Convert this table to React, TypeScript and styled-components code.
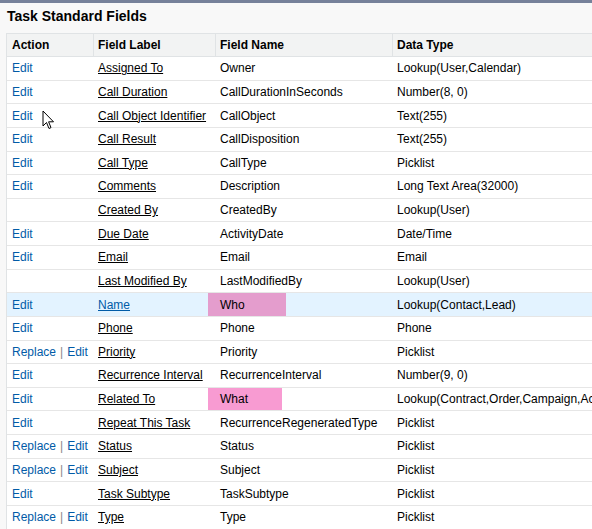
import React from "react";
import styled, { createGlobalStyle } from "styled-components";

const Global = createGlobalStyle`
  html, body { margin: 0; padding: 0; background: #f8f8f8; overflow: hidden; }
  body { font-family: "Liberation Sans", Arial, sans-serif; font-size: 12px; color: #000; }
`;

const Page = styled.div`
  position: relative;
  width: 592px;
  height: 529px;
  overflow: hidden;
  border-top: 3px solid #76819a;
  box-sizing: border-box;
`;

const Title = styled.h2`
  margin: 0;
  padding: 5px 7px 0 7px;
  height: 30px;
  box-sizing: border-box;
  font-size: 14px;
  line-height: 16px;
  font-weight: bold;
  color: #000;
`;

const Table = styled.div`
  margin-left: 6px;
  width: 760px;
  background: #fff;
  border-left: 1px solid #e0e3e5;
  border-top: 1px solid #e0e3e5;
`;

const Row = styled.div<{ $head?: boolean; $hl?: boolean }>`
  display: grid;
  grid-template-columns: 86px 122px 177px 1fr;
  height: ${(p) => (p.$head ? "23px" : "23.63px")};
  box-sizing: border-box;
  border-bottom: 1px solid ${(p) => (p.$head ? "#e0e3e5" : "#e6e6e6")};
  background: ${(p) => (p.$head ? "#f2f3f3" : p.$hl ? "#e3f3ff" : "#fff")};
`;

const HeadCell = styled.div<{ $first?: boolean }>`
  display: flex;
  align-items: center;
  padding-left: ${(p) => (p.$first ? "5px" : "4px")};
  border-left: ${(p) => (p.$first ? "none" : "1px solid #e0e3e5")};
  font-weight: bold;
  font-size: 12px;
  color: #000;
  white-space: nowrap;
`;

const Cell = styled.div<{ $pad?: number }>`
  position: relative;
  display: flex;
  align-items: center;
  padding-left: ${(p) => p.$pad ?? 5}px;
  white-space: nowrap;
  color: #000;
`;

const ActionLink = styled.a`
  color: #015ba7;
  text-decoration: none;
`;

const Pipe = styled.span`
  color: #888;
  margin: 0 4px;
`;

const LabelLink = styled.a<{ $blue?: boolean }>`
  color: ${(p) => (p.$blue ? "#015ba7" : "#000")};
  text-decoration: underline;
`;

const Mark = styled.span<{ $color: string; $w: number }>`
  position: absolute;
  left: -7px;
  top: 0px;
  bottom: 0px;
  width: ${(p) => p.$w}px;
  background: ${(p) => p.$color};
  z-index: 0;
`;

const MarkText = styled.span`
  position: relative;
  z-index: 1;
`;

const Cursor = styled.svg`
  position: absolute;
  left: 42px;
  top: 107px;
  pointer-events: none;
`;

type R = {
  action: "edit" | "replace" | "none";
  label: string;
  name: string;
  type: string;
  hl?: boolean;
  mark?: { color: string; w: number };
};

const rows: R[] = [
  { action: "edit", label: "Assigned To", name: "Owner", type: "Lookup(User,Calendar)" },
  { action: "edit", label: "Call Duration", name: "CallDurationInSeconds", type: "Number(8, 0)" },
  { action: "edit", label: "Call Object Identifier", name: "CallObject", type: "Text(255)" },
  { action: "edit", label: "Call Result", name: "CallDisposition", type: "Text(255)" },
  { action: "edit", label: "Call Type", name: "CallType", type: "Picklist" },
  { action: "edit", label: "Comments", name: "Description", type: "Long Text Area(32000)" },
  { action: "none", label: "Created By", name: "CreatedBy", type: "Lookup(User)" },
  { action: "edit", label: "Due Date", name: "ActivityDate", type: "Date/Time" },
  { action: "edit", label: "Email", name: "Email", type: "Email" },
  { action: "none", label: "Last Modified By", name: "LastModifiedBy", type: "Lookup(User)" },
  { action: "edit", label: "Name", name: "Who", type: "Lookup(Contact,Lead)", hl: true, mark: { color: "#e49dcd", w: 78 } },
  { action: "edit", label: "Phone", name: "Phone", type: "Phone" },
  { action: "replace", label: "Priority", name: "Priority", type: "Picklist" },
  { action: "edit", label: "Recurrence Interval", name: "RecurrenceInterval", type: "Number(9, 0)" },
  { action: "edit", label: "Related To", name: "What", type: "Lookup(Contract,Order,Campaign,Account,Opportunity,Product,Asset)", mark: { color: "#f89bd2", w: 74 } },
  { action: "edit", label: "Repeat This Task", name: "RecurrenceRegeneratedType", type: "Picklist" },
  { action: "replace", label: "Status", name: "Status", type: "Picklist" },
  { action: "replace", label: "Subject", name: "Subject", type: "Picklist" },
  { action: "edit", label: "Task Subtype", name: "TaskSubtype", type: "Picklist" },
  { action: "replace", label: "Type", name: "Type", type: "Picklist" },
];

function Action({ kind }: { kind: R["action"] }) {
  if (kind === "none") return null;
  if (kind === "edit") return <ActionLink href="#">Edit</ActionLink>;
  return (
    <>
      <ActionLink href="#">Replace</ActionLink>
      <Pipe>|</Pipe>
      <ActionLink href="#">Edit</ActionLink>
    </>
  );
}

export default function App() {
  return (
    <>
      <Global />
      <Page>
        <Title>Task Standard Fields</Title>
        <Table>
          <Row $head>
            <HeadCell $first>Action</HeadCell>
            <HeadCell>Field Label</HeadCell>
            <HeadCell>Field Name</HeadCell>
            <HeadCell>Data Type</HeadCell>
          </Row>
          {rows.map((r) => (
            <Row key={r.label} $hl={r.hl}>
              <Cell>
                <Action kind={r.action} />
              </Cell>
              <Cell>
                <LabelLink href="#" $blue={r.hl}>{r.label}</LabelLink>
              </Cell>
              <Cell>
                {r.mark && <Mark $color={r.mark.color} $w={r.mark.w} />}
                <MarkText>{r.name}</MarkText>
              </Cell>
              <Cell>{r.type}</Cell>
            </Row>
          ))}
        </Table>
        <Cursor width="13" height="20" viewBox="0 0 13 20">
          <path d="M1 1 L1 16 L4.5 12.5 L7 18.5 L9 17.6 L6.6 11.8 L11.5 11.8 Z" fill="#fff" stroke="#000" strokeWidth="1" strokeLinejoin="miter" />
        </Cursor>
      </Page>
    </>
  );
}
